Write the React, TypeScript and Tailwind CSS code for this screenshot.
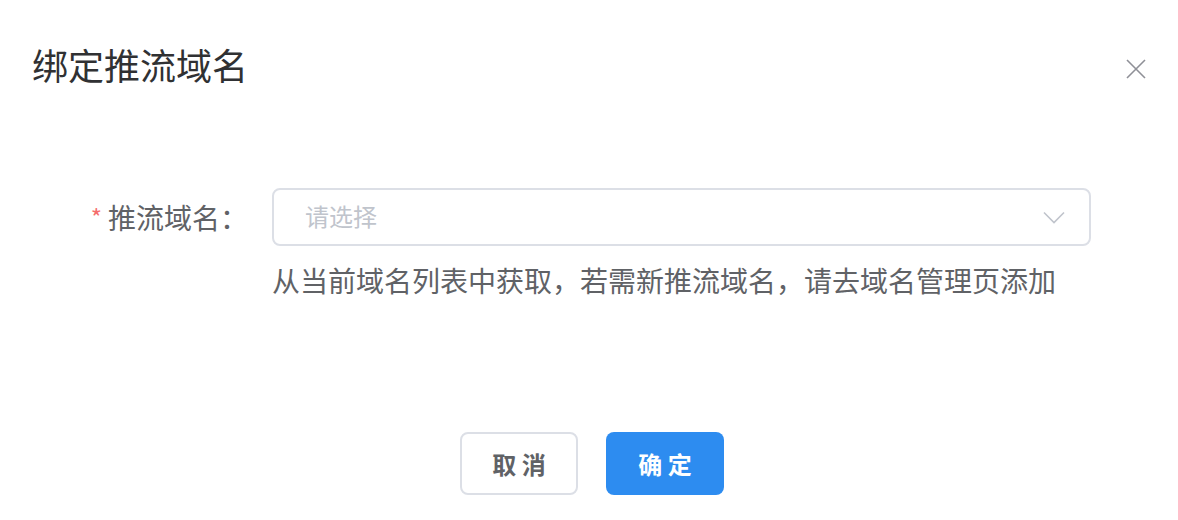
import React from 'react';

const font = { fontFamily: '"Noto Sans CJK SC", "Noto Sans", sans-serif' };

const BindPushDomain: React.FC = () => {
  return (
    <div className="w-[1178px] h-[520px] bg-white flex flex-col" style={font}>
      <div className="flex items-center justify-between pt-[38px] pl-[32px] pr-[32px]">
        <h2 className="text-[36px] leading-[52px] text-[#303133] font-normal">绑定推流域名</h2>
        <button className="w-[20px] h-[20px] flex items-center justify-center mt-[10px]">
          <svg width="20" height="20" viewBox="0 0 20 20" fill="none" stroke="#8f9097" strokeWidth="1.6">
            <path d="M1 1L19 19M19 1L1 19" />
          </svg>
        </button>
      </div>

      <div className="mt-[98px] flex items-center">
        <label className="w-[272px] pr-[24px] text-right text-[28px] leading-[40px] text-[#606266]">
          <span className="text-[#f56c6c] text-[24px] mr-[6px] align-top">*</span>
          推流域名：
        </label>
        <div className="w-[819px] h-[58px] border-2 border-[#dcdfe6] rounded-lg flex items-center justify-between pl-[31px] pr-[24px]">
          <span className="text-[24px] text-[#c0c4cc] -mt-[3px]">请选择</span>
          <svg width="22" height="13" viewBox="0 0 22 13" fill="none" stroke="#c0c4cc" strokeWidth="1.6">
            <path d="M1 1.5L11 11.5L21 1.5" />
          </svg>
        </div>
      </div>
      <p className="ml-[272px] mt-[14px] text-[28px] leading-[40px] text-[#606266]">
        从当前域名列表中获取，若需新推流域名，请去域名管理页添加
      </p>

      <div className="mt-[132px] flex justify-center gap-[28px] pl-[6px]">
        <button className="w-[118px] h-[63px] border-2 border-[#dcdfe6] rounded-lg bg-white text-[24px] font-bold text-[#606266]">
          取 消
        </button>
        <button className="w-[118px] h-[63px] rounded-lg bg-[#2d8cf0] text-[24px] font-bold text-white">
          确 定
        </button>
      </div>
    </div>
  );
};

export default function App() {
  return <BindPushDomain />;
}
